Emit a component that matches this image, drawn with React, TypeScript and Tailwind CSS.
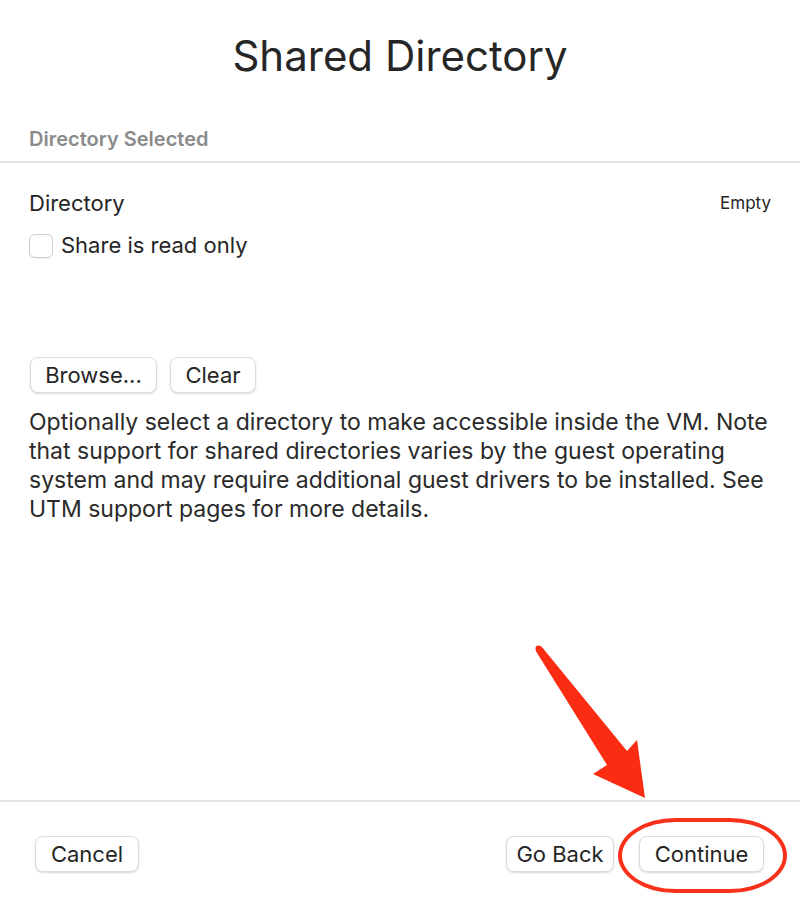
import React from "react";

function MacButton({ children, className = "" }: { children: React.ReactNode; className?: string }) {
  return (
    <div
      className={
        "flex h-[36px] items-center justify-center rounded-[8px] border border-[#dcdcdc] bg-white text-[22px] text-[#252525] shadow-[0_1px_2px_rgba(0,0,0,0.15)] " +
        className
      }
    >
      {children}
    </div>
  );
}

export default function App() {
  return (
    <div
      className="relative flex h-[908px] w-[800px] flex-col overflow-hidden bg-white text-[#252525]"
      style={{ fontFamily: "Inter, 'Noto Sans', sans-serif" }}
    >
      <div className="flex h-[112px] items-center justify-center pb-[2px]">
        <h1 className="text-[42px] font-normal text-[#262626]">Shared Directory</h1>
      </div>
      <div className="flex h-[49px] items-center px-[29px] pt-[4px]">
        <span className="text-[20px] font-semibold text-[#8b8b8b]">Directory Selected</span>
      </div>
      <div className="h-[2px] bg-[#e4e4e4]" />
      <div className="flex flex-1 flex-col px-[29px]">
        <div className="mt-[24px] flex items-center justify-between">
          <span className="text-[22px]">Directory</span>
          <span className="text-[17px]">Empty</span>
        </div>
        <div className="mt-[9px] flex items-center gap-[8px]">
          <div className="h-[24px] w-[24px] rounded-[6px] border border-[#cfcfcf] bg-white shadow-[0_1px_1px_rgba(0,0,0,0.06)]" />
          <span className="text-[22px]">Share is read only</span>
        </div>
        <div className="mt-[95px] flex gap-[13px] pl-[1px]">
          <MacButton className="w-[127px]">Browse...</MacButton>
          <MacButton className="w-[86px]">Clear</MacButton>
        </div>
        <p className="mt-[15px] text-[23px] leading-[29px] text-[#2a2a2a]">
          Optionally select a directory to make accessible inside the VM. Note
          <br />
          that support for shared directories varies by the guest operating
          <br />
          system and may require additional guest drivers to be installed. See
          <br />
          UTM support pages for more details.
        </p>
      </div>
      <div className="h-[2px] bg-[#e4e4e4]" />
      <div className="flex h-[106px] items-start justify-between pl-[35px] pr-[36px] pt-[34px]">
        <MacButton className="w-[104px]">Cancel</MacButton>
        <div className="flex gap-[25px]">
          <MacButton className="w-[108px]">Go Back</MacButton>
          <MacButton className="w-[125px]">Continue</MacButton>
        </div>
      </div>

      {/* annotation: red ellipse */}
      <div className="absolute left-[618px] top-[818px] h-[75px] w-[169px] rounded-[58px/38px] border-[4px] border-[#f9301a]" />
      {/* annotation: red arrow */}
      <svg className="absolute left-0 top-0" width="800" height="908" viewBox="0 0 800 908">
        <circle cx="538.5" cy="648.5" r="3" fill="#fb2c12" />
        <polygon
          points="535.5,650.5 541.5,646.5 627,751 637,740 645,798 593,774 607,765"
          fill="#fb2c12"
        />
      </svg>
    </div>
  );
}
